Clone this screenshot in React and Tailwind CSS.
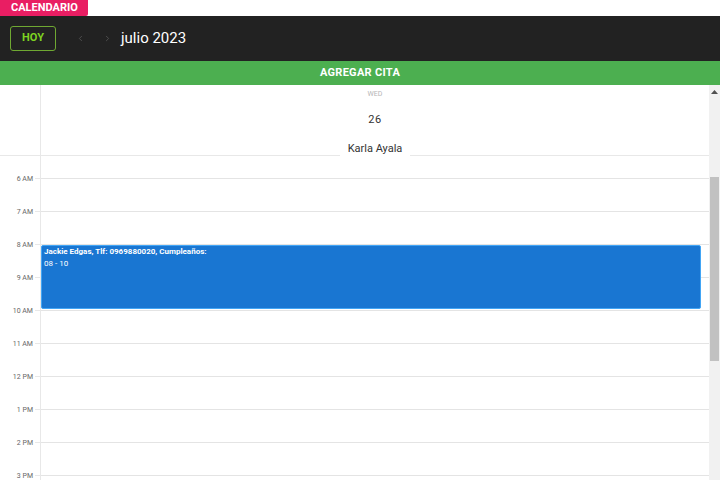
import { ChevronLeft, ChevronRight } from 'lucide-react'

const hours = ['6 AM', '7 AM', '8 AM', '9 AM', '10 AM', '11 AM', '12 PM', '1 PM', '2 PM', '3 PM']

export default function App() {
  return (
    <div className="w-[720px] h-[480px] overflow-hidden bg-white flex flex-col font-['Roboto',sans-serif]">
      {/* tab */}
      <div className="h-[16px] flex">
        <div className="w-[88px] bg-[#e91e63] text-white text-[11px] font-bold leading-[15px] pl-[11px] rounded-br-[2px]">
          CALENDARIO
        </div>
      </div>

      {/* toolbar */}
      <div className="h-[45px] bg-[#222222] flex items-center pl-[10px]">
        <button className="w-[46px] h-[25px] border border-[#6fa832] rounded-[3px] text-[#7ed321] text-[11px] font-bold">
          HOY
        </button>
        <ChevronLeft size={9} strokeWidth={2} className="ml-[20px] text-[#5a5a5a]" />
        <ChevronRight size={9} strokeWidth={2} className="ml-[18px] text-[#5a5a5a]" />
        <span className="ml-[9px] text-white text-[15px]">julio 2023</span>
      </div>

      {/* add button */}
      <div className="h-[24px] bg-[#4caf50] flex items-center justify-center pt-[1px] text-white text-[11px] font-bold tracking-[0.3px]">
        AGREGAR CITA
      </div>

      {/* calendar */}
      <div className="flex-1 flex min-h-0">
        <div className="flex-1 flex flex-col relative">
          {/* header */}
          <div className="h-[71px] flex border-b border-[#e8e8e8] shrink-0">
            <div className="w-[41px] border-r border-[#e8e8e8]" />
            <div className="flex-1 flex flex-col items-center">
              <span className="text-[7px] text-[#b5b5b5] mt-[4px] leading-[10px]">WED</span>
              <span className="text-[11px] text-[#333] tracking-[0.5px] mt-[15px] leading-[12px]">26</span>
              <span className="text-[11px] text-[#333] mt-[16px] leading-[14px] bg-white px-[8px]">Karla Ayala</span>
            </div>
          </div>

          {/* spacer before first hour */}
          <div className="h-[22px] flex shrink-0">
            <div className="w-[41px] border-r border-[#e8e8e8]" />
          </div>

          {hours.map((h) => (
            <div key={h} className="h-[33px] flex shrink-0">
              <div className="w-[41px] border-r border-[#e8e8e8] relative">
                <span className="absolute right-[7px] -top-[5px] text-[7px] leading-[12px] text-[#666]">{h}</span>
                <div className="absolute right-0 top-0 w-[5px] border-t border-[#e8e8e8]" />
              </div>
              <div className="flex-1 border-t border-[#e4e4e4]" />
            </div>
          ))}

          {/* event */}
          <div className="absolute left-[41px] top-[160px] w-[660px] h-[64px] bg-[#1976d2] border border-[#42a5f5] rounded-[2px] px-[2px] text-white text-[8px] leading-[12px]">
            <div className="font-bold">Jackie Edgas, Tlf: 0969880020, Cumpleaños:</div>
            <div>08 - 10</div>
          </div>
        </div>

        {/* scrollbar */}
        <div className="w-[11px] bg-[#f1f1f1] flex flex-col items-center shrink-0">
          <svg width="7" height="5" viewBox="0 0 7 5" className="mt-[5px]">
            <polygon points="3.5,0 7,4 0,4" fill="#505050" />
          </svg>
          <div className="w-[9px] h-[184px] bg-[#c1c1c1] mt-[82px]" />
        </div>
      </div>
    </div>
  )
}
